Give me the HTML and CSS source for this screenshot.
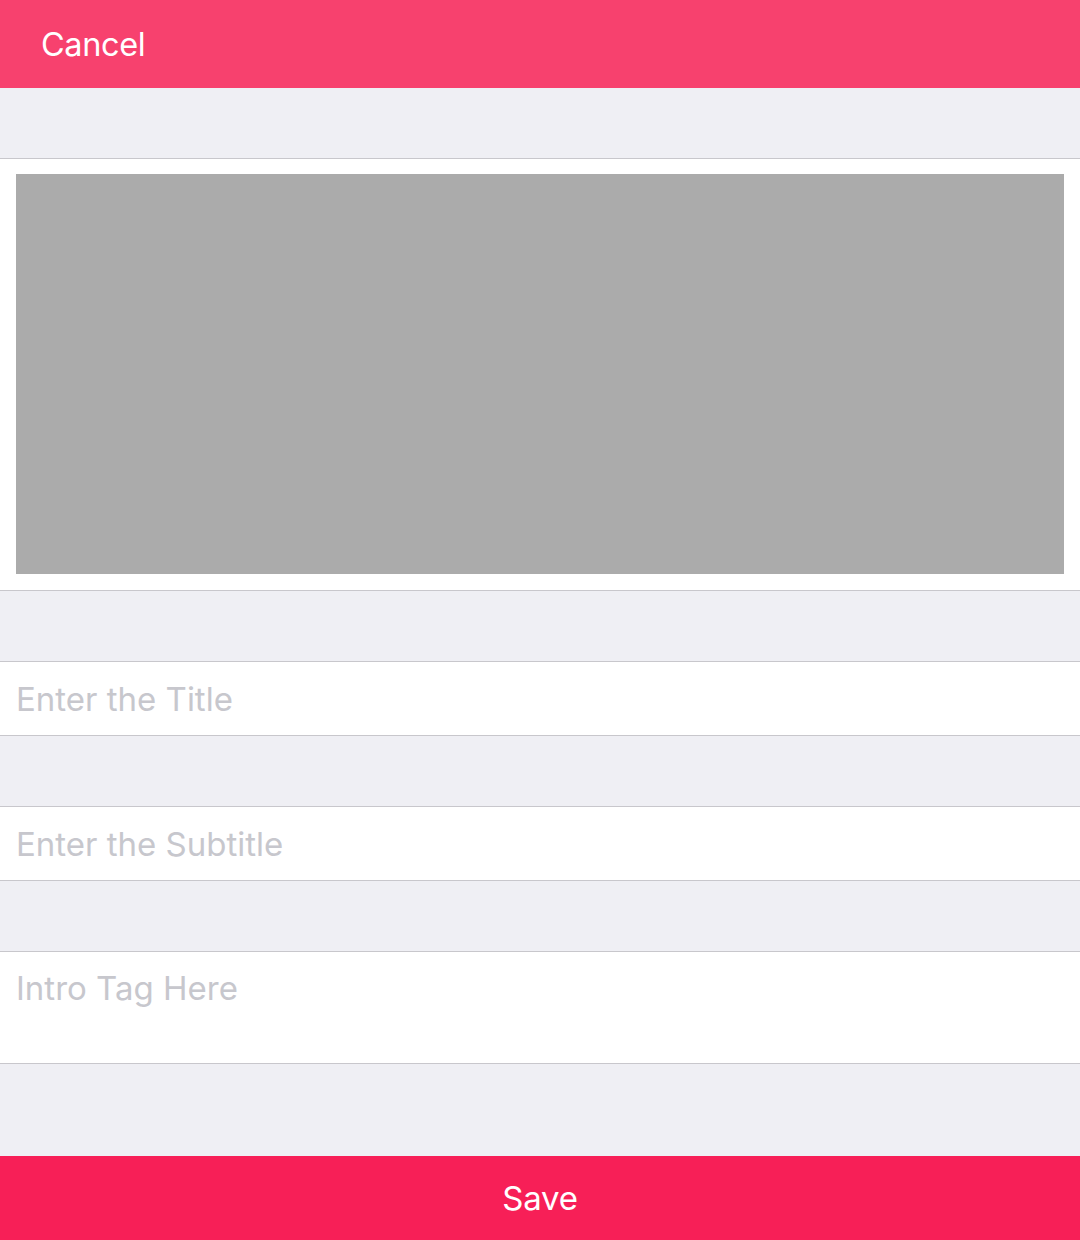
FILE: index.html
```html
<!DOCTYPE html>
<html>
<head>
<meta charset="utf-8">
<link rel="stylesheet" href="styles.css">
</head>
<body>
<div class="app">
  <header class="navbar"><span class="cancel">Cancel</span></header>
  <div class="spacer"></div>
  <section class="card image-card"><div class="image"></div></section>
  <div class="spacer"></div>
  <section class="card field"><span class="placeholder">Enter the Title</span></section>
  <div class="spacer"></div>
  <section class="card field"><span class="placeholder">Enter the Subtitle</span></section>
  <div class="spacer"></div>
  <section class="card field tall"><span class="placeholder">Intro Tag Here</span></section>
  <div class="fill"></div>
  <footer class="save"><span>Save</span></footer>
</div>
</body>
</html>
```
FILE: styles.css
```css
html, body {
  margin: 0;
  padding: 0;
}
body {
  font-family: "Inter", "Roboto", "Liberation Sans", sans-serif;
  background: #efeff4;
}
.app {
  width: 1080px;
  height: 1240px;
  display: flex;
  flex-direction: column;
  background: #efeff4;
}
.navbar {
  height: 88px;
  background: #f7416e;
  display: flex;
  align-items: center;
  padding-left: 41px;
  box-sizing: border-box;
  flex-shrink: 0;
}
.cancel {
  color: #fff;
  font-size: 32.5px;
  letter-spacing: -0.4px;
}
.spacer {
  height: 70px;
  flex-shrink: 0;
}
.card {
  background: #fff;
  border-top: 1px solid #c8c7cc;
  border-bottom: 1px solid #c8c7cc;
  flex-shrink: 0;
}
.image-card {
  padding: 15px 16px 16px;
}
.image {
  height: 400px;
  background: #ababab;
}
.field {
  height: 73px;
  display: flex;
  align-items: center;
  padding-left: 16px;
}
.field.tall {
  height: 111px;
  align-items: flex-start;
}
.field.tall .placeholder {
  padding-top: 16px;
}
.placeholder {
  color: #c7c7cd;
  font-size: 33px;
  letter-spacing: 0;
}
.fill {
  flex: 1;
}
.save {
  height: 84px;
  background: #f71f57;
  display: flex;
  align-items: center;
  justify-content: center;
  flex-shrink: 0;
}
.save span {
  color: #fff;
  font-size: 33px;
  letter-spacing: -0.2px;
}
```
